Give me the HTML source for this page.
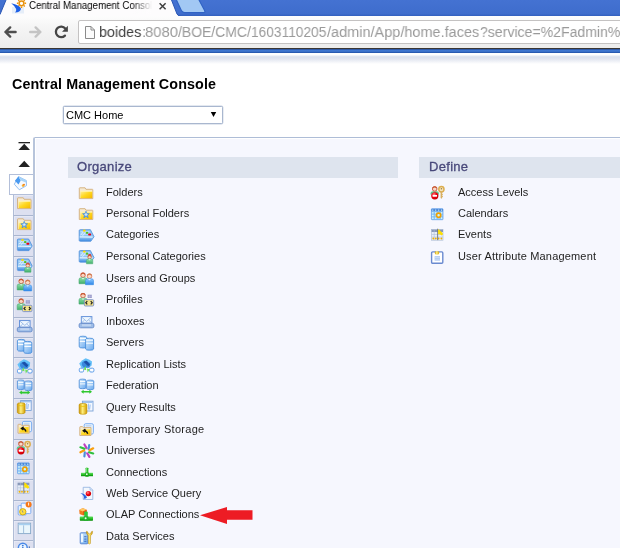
<!DOCTYPE html>
<html><head><meta charset="utf-8">
<style>
*{margin:0;padding:0;box-sizing:border-box}
html,body{width:620px;height:554px;overflow:hidden;background:#fff;font-family:"Liberation Sans",sans-serif}
.abs{position:absolute}
#frame{left:0;top:0;width:620px;height:17px;background:linear-gradient(#4472d2,#3f6dcc 80%,#2d5ab8)}
#toolbar{left:0;top:16px;width:620px;height:32px;background:linear-gradient(#fdfdfd,#f6f6f6 30%,#ececec)}
#addr{left:78px;top:20px;width:560px;height:24px;background:#fff;border:1px solid #c4c2c2;border-radius:2px}
.at{top:22.5px;font-size:15.5px;line-height:18px;color:#9a9a9a;white-space:nowrap;transform-origin:0 0;will-change:transform}
#darkline{left:0;top:48px;width:620px;height:1px;background:#3a3633}
#blueband{left:0;top:49px;width:620px;height:4px;background:linear-gradient(#234a94,#3f77d0 35%,#3a70c8 65%,#1f4ea4)}
#shade{left:0;top:53px;width:620px;height:11px;background:linear-gradient(#fff,#fff 15%,#dbe1ed 35%,#e2e6f0 55%,#fff)}
#title{left:12px;top:75.5px;letter-spacing:0.12px;font-size:14.3px;font-weight:bold;color:#000;white-space:nowrap;will-change:transform}
#sel{left:63px;top:106px;width:160px;height:18px;border:1px solid #a9b7cf;border-radius:1.5px;background:#fff;box-shadow:0 0 0 0.4px #c8d2e2}
#seltxt{left:66px;top:109px;font-size:11px;color:#000;will-change:transform}
#panel{left:33px;top:137px;width:600px;height:411px;background:#f6f7fe;border-left:2px solid #b7c4db;border-top:1px solid #aebdd7;box-shadow:inset 1px 1px 0 #fff;border-top-left-radius:2px}
.hdr{height:21px;background:#dee4ee;top:157px}
.hdrt{font-size:13px;letter-spacing:0.3px;color:#48487a;-webkit-text-stroke:0.3px #48487a;top:159px;white-space:nowrap;will-change:transform}
.it{font-size:11px;line-height:13px;color:#1e1e1e;white-space:nowrap;will-change:transform}
.tab{left:13px;width:20px;background:#dde0f0;border-left:1px solid #b0bcd6;border-top:1px solid #aab6d0;box-shadow:inset 1px 1px 0 #e6e9f5}
#seltab{left:9px;top:174px;width:24px;height:21px;background:#fff;border:1px solid #b3bfd9;border-right:none}
#bottomwhite{left:0;top:548px;width:620px;height:6px;background:#fff}
</style></head><body>
<div id="frame" class="abs"></div>
<!-- active tab -->
<svg class="abs" style="left:0;top:0" width="620" height="20">
  <path d="M0,14.5 L6,0 L171.5,0 L177,14 Q178.5,16.5 181,16.5 L620,16.5 L620,20 L0,20 Z" fill="#fdfcfd"/>
  <path d="M171.5,0 L177,14 Q178.5,16.5 181,16.5" stroke="#2b57b4" stroke-width="1" fill="none"/>
  <path d="M176,-1 L198.5,-1 L204.6,10.6 Q205.6,12.6 203.4,12.6 L184.6,12.6 Q182.6,12.6 181.6,10.9 Z" fill="#a2c8f4" stroke="#2f62c4" stroke-width="1.1"/>
</svg>
<div id="toolbar" class="abs"></div>
<svg class="abs" style="left:0;top:0" width="620" height="20">
  <path d="M0,14.5 L6,0" stroke="#2b57b4" stroke-width="1" fill="none"/>
</svg>
<!-- favicon -->
<svg class="abs" style="left:0;top:0" width="28" height="15">
  <rect x="12" y="7" width="12" height="6.5" fill="#e6eef9"/>
  <circle cx="21.5" cy="3.3" r="2.4" fill="#fff" stroke="#e8900a" stroke-width="1.5"/>
  <path d="M24.70,3.30 L26.10,3.30 M23.76,5.56 L24.75,6.55 M21.50,6.50 L21.50,7.90 M19.24,5.56 L18.25,6.55 M18.30,3.30 L16.90,3.30 M19.24,1.04 L18.25,0.05 M21.50,0.10 L21.50,-1.30 M23.76,1.04 L24.75,0.05 " stroke="#e8900a" stroke-width="1.4"/>
  <path d="M11.2,3.3 Q19.5,4.8 21,8.8 Q20.5,12.3 15,12.6 Q18.6,9.2 11.2,3.3Z" fill="#1d5fe6"/>
</svg>
<div class="abs" style="left:29px;top:0px;font-size:10px;line-height:12px;color:#000;white-space:nowrap;width:128px;overflow:hidden;transform-origin:0 0;transform:scaleX(0.97);will-change:transform">Central Management Console</div>
<div class="abs" style="left:132px;top:0px;width:24px;height:14px;background:linear-gradient(90deg,rgba(253,252,253,0),#fdfcfd 85%)"></div>
<svg class="abs" style="left:157px;top:1px" width="12" height="12"><path d="M2.6,2.3 L8.6,8.3 M8.6,2.3 L2.6,8.3" stroke="#404040" stroke-width="1.5"/></svg>

<!-- nav -->
<svg class="abs" style="left:0;top:18px" width="78" height="30">
  <path d="M15.6,14 L5.6,14 M10.2,9.4 L5.4,14 L10.2,18.6" stroke="#4e4e4e" stroke-width="2.4" fill="none" stroke-linecap="round" stroke-linejoin="round"/>
  <path d="M30.2,14 L40.2,14 M35.6,9.4 L40.4,14 L35.6,18.6" stroke="#c4c4c4" stroke-width="2.4" fill="none" stroke-linecap="round" stroke-linejoin="round"/>
  <path d="M65.26,10.49 A5.3,5.3 0 1 0 64.95,17.65" stroke="#454545" stroke-width="2.3" fill="none" stroke-linecap="round"/>
  <path d="M67.9,7.8 L67.9,13.7 L62,13.7 Z" fill="#454545"/>
</svg>
<div id="addr" class="abs"></div>
<svg class="abs" style="left:84px;top:25px" width="12" height="15">
  <path d="M1.5,1.5 L7,1.5 L10.5,5 L10.5,13.5 L1.5,13.5 Z M7,1.5 L7,5 L10.5,5" fill="#fbfbfb" stroke="#8a8a8a" stroke-width="1"/>
</svg>
<div class="abs at" style="left:99.1px;color:#404040;transform:scaleX(0.925)">boides</div>
<div class="abs at" style="left:141.9px">:</div>
<div class="abs at" style="left:145px;transform:scaleX(0.96)">8080</div>
<div class="abs at" style="left:178px;transform:scaleX(0.9)">/BOE/CMC/</div>
<div class="abs at" style="left:251.1px;transform:scaleX(0.886)">1603110205</div>
<div class="abs at" style="left:326.5px;transform:scaleX(0.935)">/admin/App/home.faces</div>
<div class="abs at" style="left:480px;transform:scaleX(0.908)">?service=%2Fadmin%2F</div>
<div id="darkline" class="abs"></div>
<div id="blueband" class="abs"></div>
<div id="shade" class="abs"></div>

<div id="title" class="abs">Central Management Console</div>
<div id="sel" class="abs"></div>
<div id="seltxt" class="abs">CMC Home</div>
<svg class="abs" style="left:209px;top:110px" width="10" height="9"><path d="M1.8,2 L7.2,2 L4.5,7 Z" fill="#000"/></svg>

<!-- sidebar arrows -->
<svg class="abs" style="left:17px;top:140px" width="15" height="30">
  <rect x="1.5" y="2" width="11.5" height="1.3" fill="#222"/>
  <path d="M1.5,10 L7.25,3.8 L13,10 Z" fill="#222"/>
  <path d="M1.5,27 L7.25,20.8 L13,27 Z" fill="#222"/>
</svg>

<div id="panel" class="abs"></div>
<div id="tabs"><div class="abs tab" style="top:194px;height:21px"></div><div class="abs tab" style="top:215px;height:20px"></div><div class="abs tab" style="top:235px;height:21px"></div><div class="abs tab" style="top:256px;height:20px"></div><div class="abs tab" style="top:276px;height:20px"></div><div class="abs tab" style="top:296px;height:21px"></div><div class="abs tab" style="top:317px;height:20px"></div><div class="abs tab" style="top:337px;height:20px"></div><div class="abs tab" style="top:357px;height:21px"></div><div class="abs tab" style="top:378px;height:20px"></div><div class="abs tab" style="top:398px;height:20px"></div><div class="abs tab" style="top:418px;height:21px"></div><div class="abs tab" style="top:439px;height:20px"></div><div class="abs tab" style="top:459px;height:20px"></div><div class="abs tab" style="top:479px;height:21px"></div><div class="abs tab" style="top:500px;height:20px"></div><div class="abs tab" style="top:520px;height:20px"></div><div class="abs tab" style="top:540px;height:21px"></div></div><!--/tabs-->
<div id="seltab" class="abs"></div>

<div class="abs hdr" style="left:68px;width:330px"></div>
<div class="abs hdrt" style="left:77px">Organize</div>
<div class="abs hdr" style="left:419px;width:201px"></div>
<div class="abs hdrt" style="left:428.5px">Define</div>

<svg id="icons" class="abs" style="left:0;top:0;overflow:hidden" width="620" height="548"><defs>
<linearGradient id="gy" x1="0" y1="0" x2="1" y2="1"><stop offset="0" stop-color="#fff0a0"/><stop offset="0.5" stop-color="#ffd820"/><stop offset="1" stop-color="#f5b800"/></linearGradient>
<linearGradient id="gb" x1="0" y1="0" x2="0" y2="1"><stop offset="0" stop-color="#a8d4f8"/><stop offset="1" stop-color="#3f8ae0"/></linearGradient>
<linearGradient id="gb2" x1="0" y1="0" x2="1" y2="1"><stop offset="0" stop-color="#d8ecfc"/><stop offset="1" stop-color="#6aaaf0"/></linearGradient>
<linearGradient id="gg" x1="0" y1="0" x2="0" y2="1"><stop offset="0" stop-color="#8ee0a8"/><stop offset="1" stop-color="#3fae6a"/></linearGradient>
<linearGradient id="gbl" x1="0" y1="0" x2="0" y2="1"><stop offset="0" stop-color="#8cc8ff"/><stop offset="1" stop-color="#2e86e8"/></linearGradient>
<linearGradient id="ggold" x1="0" y1="0" x2="1" y2="0"><stop offset="0" stop-color="#c89000"/><stop offset="0.45" stop-color="#fff080"/><stop offset="1" stop-color="#d09a00"/></linearGradient>
<linearGradient id="gpipe" x1="0" y1="0" x2="0" y2="1"><stop offset="0" stop-color="#60e060"/><stop offset="0.5" stop-color="#2ec02e"/><stop offset="1" stop-color="#008a00"/></linearGradient>
<radialGradient id="gred" cx="0.4" cy="0.35" r="0.7"><stop offset="0" stop-color="#ff9090"/><stop offset="0.5" stop-color="#f00010"/><stop offset="1" stop-color="#c00000"/></radialGradient>
<radialGradient id="gstar" cx="0.5" cy="0.5" r="0.5"><stop offset="0" stop-color="#e8f6ff"/><stop offset="1" stop-color="#3a8ae8"/></radialGradient>
<symbol id="folder" viewBox="0 0 20 20">
 <path d="M3.3,14.6 L3.3,4.3 Q3.3,3.8 3.8,3.8 L9.1,3.8 L9.9,5.3 L16.3,5.3 Q16.8,5.3 16.8,5.8 L16.8,14.6 Z" fill="#f6ead2" stroke="#d2ae78" stroke-width="0.9"/>
 <rect x="4.4" y="6.9" width="11.8" height="7.2" fill="url(#gy)"/>
 <rect x="4.4" y="6.9" width="11.8" height="0.8" fill="#fff6c0"/>
</symbol>
<symbol id="i0" viewBox="0 0 20 20"><use href="#folder" width="20" height="20"/></symbol>
<symbol id="i1" viewBox="0 0 20 20"><use href="#folder" width="20" height="20"/>
 <path d="M10,6.3 L11,8.6 L13.4,8.8 L11.6,10.4 L12.2,12.8 L10,11.5 L7.8,12.8 L8.4,10.4 L6.6,8.8 L9,8.6 Z" fill="url(#gstar)" stroke="#3a86e0" stroke-width="0.6"/>
</symbol>
<symbol id="cat" viewBox="0 0 20 20">
 <path d="M3.2,5 Q3.2,4 4.2,4 L14.4,4 L18,11 L14.8,15.6 L4.2,15.6 Q3.2,15.6 3.2,14.6 Z" fill="#8ec4f4" stroke="#4a8ad8" stroke-width="0.8"/>
 <path d="M4.6,9.6 L7.4,6 M6.4,10.4 L9.6,6.4" stroke="#f0f8ff" stroke-width="0.7"/>
 <path d="M4.4,6.2 L13.6,6.2 M4.4,8.4 L14.6,8.4" stroke="#e0f0ff" stroke-width="0.7"/>
 <path d="M3.6,10.8 L17.4,11 L14.5,15.3 L3.6,15.3 Z" fill="url(#gb)"/>
 <path d="M3.8,11.2 L16.6,11.4" stroke="#f4faff" stroke-width="0.9"/>
 <ellipse cx="8.3" cy="5" rx="1.4" ry="1.1" fill="#ffd800"/>
 <ellipse cx="11" cy="7.1" rx="1.3" ry="1.1" fill="#50c020"/>
 <rect x="12.2" y="7.7" width="2.9" height="2" rx="0.6" fill="#e80010"/>
</symbol>
<symbol id="i2" viewBox="0 0 20 20"><use href="#cat" width="20" height="20"/></symbol>
<symbol id="person" viewBox="0 0 20 20">
 <circle cx="10" cy="6" r="2.3" fill="#f8d4c0" stroke="#cc6040" stroke-width="0.9"/>
 <path d="M7.9,5.2 Q10,2.8 12.1,5.2" stroke="#c85a36" stroke-width="1.3" fill="none"/>
 <path d="M6,14.5 L6,10.4 Q6,8.6 8,8.6 L12,8.6 Q14,8.6 14,10.4 L14,14.5 Z" fill="url(#gg)" stroke="#4aa870" stroke-width="0.6"/>
 <path d="M8.5,8.8 L10,10.4 L11.5,8.8" fill="#d8f8e8"/>
</symbol>
<symbol id="personb" viewBox="0 0 20 20">
 <circle cx="10" cy="6" r="2.3" fill="#fadcc8" stroke="#d88060" stroke-width="0.9"/>
 <path d="M7.9,5.2 Q10,2.8 12.1,5.2" stroke="#d07850" stroke-width="1.3" fill="none"/>
 <path d="M6,14.5 L6,10.4 Q6,8.6 8,8.6 L12,8.6 Q14,8.6 14,10.4 L14,14.5 Z" fill="url(#gbl)" stroke="#3a90e8" stroke-width="0.6"/>
 <path d="M8.5,8.8 L10,10.4 L11.5,8.8" fill="#d8f0ff"/>
</symbol>
<symbol id="i3" viewBox="0 0 20 20"><g transform="translate(0,-1)"><use href="#cat" width="20" height="20"/></g>
 <use href="#person" x="5.6" y="4.6" width="16" height="16"/>
</symbol>
<symbol id="i4" viewBox="0 0 20 20">
 <use href="#person" x="-3" y="-0.6" width="20" height="20"/>
 <use href="#personb" x="3.5" y="0.4" width="20" height="20"/>
</symbol>
<symbol id="i5" viewBox="0 0 20 20">
 <use href="#person" x="-3" y="-0.8" width="20" height="20" transform="translate(0,0)"/>
 <rect x="11.6" y="4.3" width="4.2" height="3.3" fill="#9898c8"/>
 <path d="M11.6,5.9 L15.8,5.9 M13.7,4.3 L13.7,7.6" stroke="#c8c8e8" stroke-width="0.5"/>
 <rect x="8.3" y="9.3" width="9.4" height="6.3" rx="1" fill="#f4e48a" stroke="#7a90c8" stroke-width="0.9"/>
 <path d="M11.3,10.8 L9.8,12.4 L11.3,14 M14.7,10.8 L16.2,12.4 L14.7,14" stroke="#222" stroke-width="1.2" fill="none"/>
</symbol>
<symbol id="i6" viewBox="0 0 20 20">
 <rect x="5.3" y="3.6" width="10.6" height="6.6" fill="#eef6fe" stroke="#5a8ad8" stroke-width="0.9"/>
 <path d="M5.6,4 L10.6,8.4 L15.6,4 M5.8,9.6 L8.6,7 M15.4,9.6 L12.6,7" stroke="#80a8e0" stroke-width="0.7" fill="none"/>
 <rect x="3.1" y="10.3" width="14.8" height="4.5" rx="1.5" fill="#9ebde8" stroke="#5a82c4" stroke-width="0.8"/>
 <rect x="6" y="11.2" width="9" height="2" fill="#c0d4f0"/>
</symbol>
<symbol id="cyl" viewBox="0 0 20 20">
 <path d="M1,2 Q1,0.5 4,0.5 Q7,0.5 7,2 L7,10.5 Q7,12 4,12 Q1,12 1,10.5 Z" fill="url(#gb2)" stroke="#4a8ad8" stroke-width="0.8"/>
 <path d="M1.6,3.2 Q4,4.2 6.4,3.2 M1.6,6.4 Q4,7.4 6.4,6.4" stroke="#ffffff" stroke-width="1" fill="none"/>
</symbol>
<symbol id="i7" viewBox="0 0 20 20">
 <path d="M3.2,3.6 Q3.2,2.4 7,2.4 Q10.8,2.4 10.8,3.6 L10.8,13 Q10.8,14.2 7,14.2 Q3.2,14.2 3.2,13 Z" fill="url(#gb2)" stroke="#3e86d8" stroke-width="0.8"/>
 <path d="M3.8,4.6 L10.2,4.6 M3.8,7.6 L10.2,7.6" stroke="#fff" stroke-width="1"/>
 <path d="M9.6,5.6 Q9.6,4.4 13.6,4.4 Q17.6,4.4 17.6,5.6 L17.6,15.2 Q17.6,16.4 13.6,16.4 Q9.6,16.4 9.6,15.2 Z" fill="url(#gb2)" stroke="#3e86d8" stroke-width="0.8"/>
 <path d="M10.2,6.4 L17,6.4 M10.2,9.4 L17,9.4" stroke="#fff" stroke-width="1"/>
</symbol>
<symbol id="i8" viewBox="0 0 20 20">
 <path d="M3.2,7.4 L6.4,4.2 L9.6,2.2 L13,3.4 L16,5.6 L15.6,9.6 L12.6,12 L5.6,12 Z" fill="#64c0f8"/>
 <path d="M6,6.4 L9.6,4.4 L14.6,7.2 L13.6,11.4 L7.6,11.6 L5.8,9 Z" fill="#3a88dc"/>
 <path d="M7.4,5.8 L10.6,4.8 L14,8.4 L12.2,10.2 Z" fill="#1a50a8"/>
 <rect x="3.3" y="12.2" width="4.3" height="3.8" rx="1.2" fill="#fff" stroke="#5a9ae8" stroke-width="1"/>
 <rect x="13.6" y="12.2" width="4.3" height="3.8" rx="1.2" fill="#fff" stroke="#5a9ae8" stroke-width="1"/>
 <path d="M9.8,10 L7.4,13.4 L10.2,14.2 Z M11.6,16.6 L13.8,13.2 L11,12.4 Z" fill="#70e060"/>
</symbol>
<symbol id="i9" viewBox="0 0 20 20">
 <path d="M3.2,3 Q3.2,2 6.6,2 Q10,2 10,3 L10,10.6 Q10,11.6 6.6,11.6 Q3.2,11.6 3.2,10.6 Z" fill="url(#gb2)" stroke="#4a8ad8" stroke-width="0.8"/>
 <path d="M4,4.4 L9.2,4.4 M4,6.8 L9.2,6.8" stroke="#fff" stroke-width="0.9"/>
 <path d="M10.6,4 Q10.6,3 14.2,3 Q17.8,3 17.8,4 L17.8,11.6 Q17.8,12.6 14.2,12.6 Q10.6,12.6 10.6,11.6 Z" fill="url(#gb2)" stroke="#4a8ad8" stroke-width="0.8"/>
 <path d="M11.4,5.4 L17,5.4 M11.4,7.8 L17,7.8" stroke="#fff" stroke-width="0.9"/>
 <path d="M5,14.6 L7.6,12.6 L7.6,13.8 L13.4,13.8 L13.4,12.6 L16,14.6 L13.4,16.6 L13.4,15.4 L7.6,15.4 L7.6,16.6 Z" fill="#2ec82e"/>
</symbol>
<symbol id="i10" viewBox="0 0 20 20">
 <rect x="6.4" y="2.6" width="10.6" height="9.8" fill="#f4f8ff" stroke="#7aa2d8" stroke-width="0.9"/>
 <rect x="6.8" y="3" width="9.8" height="1.4" fill="#a0c4f0"/>
 <path d="M12.6,5 L12.6,11 M14.2,6 L13.6,11" stroke="#90b8f0" stroke-width="0.9"/>
 <path d="M3.1,6 Q3.1,4.8 7,4.8 Q10.9,4.8 10.9,6 L10.9,14.4 Q10.9,15.7 7,15.7 Q3.1,15.7 3.1,14.4 Z" fill="url(#ggold)" stroke="#c09000" stroke-width="0.6"/>
 <path d="M3.6,7.4 Q7,8.4 10.4,7.4" stroke="#e8c000" stroke-width="0.7" fill="none"/>
</symbol>
<symbol id="i11" viewBox="0 0 20 20">
 <rect x="8.2" y="3.4" width="9.2" height="10.4" rx="1.5" fill="#e8f2fc" stroke="#70a8f0" stroke-width="0.9"/>
 <path d="M9.6,5.3 L15.4,5.3 M10,6.8 L15.4,6.8" stroke="#a8c8f0" stroke-width="0.7"/>
 <path d="M3.8,15.2 L3.8,6.9 Q3.8,6.3 4.4,6.3 L6.5,6.3 L7.3,7.3 L15,7.3 L15,15.2 Z" fill="#f6ead2" stroke="#d2ae78" stroke-width="0.9"/>
 <rect x="5" y="9" width="9.4" height="5.6" fill="url(#gy)"/>
 <path d="M11.8,13.4 Q10.6,10.4 8,10.2 M9.4,8.8 L7.2,10.4 L9.2,12" stroke="#111" stroke-width="1.3" fill="none"/>
</symbol>
<symbol id="i12" viewBox="0 0 20 20">
 <g stroke-linecap="round" stroke-width="2.2">
 <path d="M8.4,2.8 L10.6,6.4" stroke="#c040c0"/>
 <path d="M13.2,3.4 L12.6,7.4" stroke="#4a90d8"/>
 <path d="M17.2,6.6 L13.6,8.6" stroke="#f8a010"/>
 <path d="M17.2,11.8 L13,10.6" stroke="#30c040"/>
 <path d="M13.4,15.2 L11.2,11.6" stroke="#c040c0"/>
 <path d="M8.4,14.6 L8.8,10.6" stroke="#4a90d8"/>
 <path d="M4.4,10.6 L8.2,8.6" stroke="#f8a010"/>
 <path d="M4.4,5.6 L8.6,7" stroke="#30c040"/>
 </g>
</symbol>
<symbol id="pipe" viewBox="0 0 20 20">
 <rect x="9.6" y="3.6" width="2.8" height="6" rx="0.6" fill="#2ec02e"/>
 <rect x="9.9" y="3.6" width="1" height="5" fill="#7ee07e"/>
 <rect x="5" y="8.7" width="12" height="3.4" fill="url(#gpipe)"/>
 <rect x="9.2" y="8.4" width="3.6" height="4.2" rx="0.6" fill="#1aa81a"/>
 <circle cx="10.8" cy="10.1" r="0.9" fill="#e8ffe8"/>
</symbol>
<symbol id="i13" viewBox="0 0 20 20"><use href="#pipe" width="20" height="20"/></symbol>
<symbol id="i14" viewBox="0 0 20 20">
 <path d="M7.2,2.4 L14,2.4 L16.8,5.2 L16.8,14.6 L7.2,14.6 Z" fill="#f2f7fd" stroke="#8eb0e0" stroke-width="0.8"/>
 <path d="M14,2.4 L14,5.2 L16.8,5.2" fill="#d8e6f8" stroke="#8eb0e0" stroke-width="0.6"/>
 <circle cx="12.4" cy="8.7" r="2.7" fill="url(#gred)"/>
 <path d="M4.4,8.4 Q9.4,8.6 11,12.6 Q10,14 7.6,13.8 Q9.4,11 4.4,8.4 Z" fill="#2a64e0"/>
</symbol>
<symbol id="i15" viewBox="0 0 20 20">
 <path d="M3.2,4 L6.8,2.2 L10.6,3.8 L10.6,7.4 L7.2,9.6 L3.6,8 Z" fill="#f07a20"/>
 <path d="M3.2,4 L6.8,2.2 L10.6,3.8 L7,5.6 Z" fill="#ffc868"/>
 <path d="M7,5.6 L10.6,3.8 L10.6,7.4 L7.2,9.6 Z" fill="#e05a10"/>
 <rect x="8.2" y="5.6" width="3.6" height="6" rx="1" fill="#2ec83a"/>
 <rect x="3.8" y="10.6" width="13.2" height="4.2" rx="0.6" fill="url(#gpipe)"/>
 <rect x="7.6" y="10.4" width="4.8" height="4.6" rx="0.6" fill="#26b030"/>
 <circle cx="9.6" cy="12.4" r="1" fill="#e8ffe8"/>
</symbol>
<symbol id="i16" viewBox="0 0 20 20">
 <rect x="4.2" y="4.7" width="7.6" height="11" rx="0.8" fill="url(#gb2)" stroke="#5080d0" stroke-width="0.9"/>
 <rect x="5.2" y="6" width="1.6" height="8" fill="#fff"/>
 <path d="M8.2,8.6 L10.4,8.6 M8.2,11 L10.4,11 M8.2,13.2 L10.4,13.2" stroke="#3a64b8" stroke-width="0.9"/>
 <path d="M10.4,3.2 Q10.2,6 12.2,7.6 L12.4,15.4 Q13.4,16.4 14.4,15.4 L14.6,7.6 Q16.8,6 16.6,3.2 L15.4,3.6 Q15.2,5.6 13.5,5.8 Q11.8,5.6 11.6,3.6 Z" fill="url(#ggold)" stroke="#b88a10" stroke-width="0.5"/>
</symbol>
<symbol id="d0" viewBox="0 0 20 20">
 <path d="M2.4,10.4 Q2.4,7.2 5,7.2 L8.6,7.2 Q11,7.2 11,10.4 Z" fill="#5cc890"/>
 <circle cx="6.7" cy="4.9" r="2.3" fill="#f8d8c8" stroke="#cc6040" stroke-width="1"/>
 <path d="M4.5,4.2 Q6.7,1.6 8.9,4.2" stroke="#c85a36" stroke-width="1.2" fill="none"/>
 <circle cx="6.8" cy="11.8" r="3.6" fill="url(#gred)"/>
 <rect x="4.6" y="11" width="4.4" height="1.7" fill="#fff"/>
 <ellipse cx="13.4" cy="5.3" rx="2.6" ry="2.7" fill="#f4e4c0" stroke="#dcae50" stroke-width="1.5"/>
 <circle cx="13.4" cy="4.8" r="0.8" fill="#a08040"/>
 <path d="M12.6,7.6 L14.2,7.6 L14.2,14 L13.4,14.8 L12.6,14 Z" fill="#d8b060"/>
 <rect x="14" y="10.2" width="0.9" height="0.9" fill="#d8b060"/><rect x="14" y="12" width="0.9" height="0.9" fill="#d8b060"/>
</symbol>
<symbol id="d1" viewBox="0 0 20 20">
 <rect x="3.4" y="3.9" width="11.6" height="10.9" rx="0.6" fill="#a8d8fc" stroke="#5a9ae8" stroke-width="0.7"/>
 <rect x="3.4" y="3.9" width="11.6" height="2.6" fill="#4a88dc"/>
 <path d="M6.2,6.5 L6.2,14.8 M9.2,6.5 L9.2,14.8 M12.2,6.5 L12.2,14.8 M3.4,9.2 L15,9.2 M3.4,11.9 L15,11.9" stroke="#6ab0f0" stroke-width="0.6"/>
 <path d="M4.8,5.2 L4.8,5.2 M7.7,5.2 L7.7,5.2 M10.7,5.2 L10.7,5.2 M13.6,5.2 L13.6,5.2 M4.8,7.9 L4.8,7.9 M7.7,7.9 L7.7,7.9 M13.6,7.9 L13.6,7.9 M4.8,10.6 L4.8,10.6 M4.8,13.3 L4.8,13.3 M7.7,13.3 L7.7,13.3 M13.6,13.3 L13.6,13.3" stroke="#e8fff0" stroke-width="1.3" stroke-linecap="round"/>
 <circle cx="10.6" cy="10.3" r="2.1" fill="#c8f4ff" stroke="#f0a000" stroke-width="1.7"/>
</symbol>
<symbol id="d2" viewBox="0 0 20 20">
 <rect x="3.6" y="3.9" width="11.4" height="10.6" fill="#e8eef8" stroke="#a8b8d0" stroke-width="0.6"/>
 <rect x="3.6" y="3.9" width="11.4" height="2.4" fill="#8898b8"/>
 <path d="M6.2,4 L6.2,14.5 M3.6,8.8 L15,8.8 M3.6,11.4 L15,11.4" stroke="#b0c0d8" stroke-width="0.6"/>
 <path d="M5.3,12.8 L5.3,12.8 M7.8,12.8 L7.8,12.8 M10.6,12.8 L10.6,12.8 M13.4,12.8 L13.4,12.8" stroke="#f0b000" stroke-width="1.9" stroke-linecap="round"/>
 <rect x="9.2" y="3" width="0.9" height="11.4" fill="#707880"/>
 <path d="M10.1,3.6 Q12,4.2 12.6,5.6 Q14,6.4 15.2,8.2 L13.6,9.8 Q12,8 10.1,8.6 Z" fill="#ffe000"/>
</symbol>
<symbol id="d3" viewBox="0 0 20 20">
 <rect x="3.6" y="4.3" width="11.2" height="11.3" rx="1" fill="#fff" stroke="#6a8ad0" stroke-width="1.4"/>
 <ellipse cx="9" cy="5.2" rx="2.3" ry="1.9" fill="url(#ggold)"/>
 <rect x="6.6" y="8.6" width="5.4" height="4.4" fill="#a8c4f0"/>
 <path d="M6.6,10 L12,10 M6.6,11.6 L12,11.6" stroke="#e0ecff" stroke-width="0.6"/>
</symbol>
<symbol id="home" viewBox="0 0 20 20">
 <path d="M2.8,10.2 L7.8,15.8 L15,11.6 L14.8,6.5 L7,2.6 Z" fill="#f6faff" stroke="#7ab0f0" stroke-width="0.8"/>
 <path d="M3.4,6.8 L7,2.4 L9.2,6.5 L7,10.6 Z" fill="#4a9af0"/>
 <path d="M7,2.4 L14.9,6.4 L14.4,8.4 L9.2,6.5 Z" fill="#a8d4f8"/>
 <circle cx="11.6" cy="11.6" r="1.3" fill="#f8b030"/>
 <circle cx="12.5" cy="10.6" r="0.9" fill="#f07810"/>
</symbol>
<symbol id="s15" viewBox="0 0 20 20">
 <rect x="4" y="5.6" width="8" height="9.4" rx="1" fill="#e8f2fc" stroke="#6aa0f0" stroke-width="0.8"/>
 <rect x="7" y="3.2" width="9.6" height="10.4" rx="1" fill="#f4f8ff" stroke="#6aa0f0" stroke-width="0.8"/>
 <circle cx="14.4" cy="4.6" r="3" fill="#f87818"/>
 <rect x="14" y="2.6" width="0.9" height="3" fill="#fff"/>
 <circle cx="8.6" cy="11.8" r="3.2" fill="#ffe040" stroke="#c8a000" stroke-width="0.8"/>
 <path d="M8,10.4 L8.8,12.6" stroke="#5070c0" stroke-width="0.7"/>
</symbol>
<symbol id="s16" viewBox="0 0 20 20">
 <rect x="4" y="3.2" width="12.4" height="10.4" fill="#eaf6fc" stroke="#88a8c8" stroke-width="0.9"/>
 <rect x="4.4" y="3.6" width="11.6" height="1.6" fill="#a8d0f0"/>
 <path d="M9.4,5.4 L9.4,13.4" stroke="#98b8d8" stroke-width="0.9"/>
</symbol>
<symbol id="s17" viewBox="0 0 20 20">
 <circle cx="8.6" cy="7.6" r="4.4" fill="#e8f4ff" stroke="#4a8ae8" stroke-width="1.5"/>
 <circle cx="8.6" cy="5.6" r="0.9" fill="#3a78d8"/>
 <rect x="7.9" y="7" width="1.4" height="3.6" fill="#3a78d8"/>
 <rect x="14.6" y="6.4" width="1" height="5" fill="#3060b0"/>
</symbol>
</defs><use href="#i0" x="76" y="184.00" width="20" height="20"/><use href="#i1" x="76" y="204.90" width="20" height="20"/><use href="#i2" x="76" y="225.70" width="20" height="20"/><use href="#i3" x="76" y="247.60" width="20" height="20"/><use href="#i4" x="76" y="269.80" width="20" height="20"/><use href="#i5" x="76" y="290.40" width="20" height="20"/><use href="#i6" x="76" y="313.00" width="20" height="20"/><use href="#i7" x="76" y="333.80" width="20" height="20"/><use href="#i8" x="76" y="356.00" width="20" height="20"/><use href="#i9" x="76" y="377.10" width="20" height="20"/><use href="#i10" x="76" y="398.60" width="20" height="20"/><use href="#i11" x="76" y="420.30" width="20" height="20"/><use href="#i12" x="76" y="441.70" width="20" height="20"/><use href="#i13" x="76" y="464.10" width="20" height="20"/><use href="#i14" x="76" y="484.90" width="20" height="20"/><use href="#i15" x="76" y="505.90" width="20" height="20"/><use href="#i16" x="76" y="528.10" width="20" height="20"/><use href="#d0" x="428" y="184.00" width="20" height="20"/><use href="#d1" x="428" y="204.90" width="20" height="20"/><use href="#d2" x="428" y="225.70" width="20" height="20"/><use href="#d3" x="428" y="247.60" width="20" height="20"/><use href="#i0" x="14.2" y="194" width="20" height="20"/><use href="#i1" x="14.2" y="215" width="20" height="20"/><use href="#i2" x="14.2" y="235" width="20" height="20"/><use href="#i3" x="14.2" y="256" width="20" height="20"/><use href="#i4" x="14.2" y="276" width="20" height="20"/><use href="#i5" x="14.2" y="296" width="20" height="20"/><use href="#i6" x="14.2" y="317" width="20" height="20"/><use href="#i7" x="14.2" y="337" width="20" height="20"/><use href="#i8" x="14.2" y="357" width="20" height="20"/><use href="#i9" x="14.2" y="378" width="20" height="20"/><use href="#i10" x="14.2" y="398" width="20" height="20"/><use href="#i11" x="14.2" y="418" width="20" height="20"/><use href="#d0" x="14.2" y="439" width="20" height="20"/><use href="#d1" x="14.2" y="459" width="20" height="20"/><use href="#d2" x="14.2" y="479" width="20" height="20"/><use href="#s15" x="14.2" y="500" width="20" height="20"/><use href="#s16" x="14.2" y="520" width="20" height="20"/><use href="#s17" x="14.2" y="540" width="20" height="20"/><use href="#home" x="11.5" y="174" width="20" height="20"/></svg><!--/icons-->
<div id="items"><div class="abs it" style="left:106px;top:186.39px">Folders</div><div class="abs it" style="left:106px;top:207.29px">Personal Folders</div><div class="abs it" style="left:106px;top:228.09px">Categories</div><div class="abs it" style="left:106px;top:249.99px">Personal Categories</div><div class="abs it" style="left:106px;top:272.19px">Users and Groups</div><div class="abs it" style="left:106px;top:292.79px">Profiles</div><div class="abs it" style="left:106px;top:315.39px">Inboxes</div><div class="abs it" style="left:106px;top:336.19px">Servers</div><div class="abs it" style="left:106px;top:358.39px">Replication Lists</div><div class="abs it" style="left:106px;top:379.49px">Federation</div><div class="abs it" style="left:106px;top:400.99px">Query Results</div><div class="abs it" style="left:106px;top:422.69px;letter-spacing:0.29px">Temporary Storage</div><div class="abs it" style="left:106px;top:444.09px">Universes</div><div class="abs it" style="left:106px;top:466.49px">Connections</div><div class="abs it" style="left:106px;top:487.29px">Web Service Query</div><div class="abs it" style="left:106px;top:508.29px">OLAP Connections</div><div class="abs it" style="left:106px;top:530.49px">Data Services</div><div class="abs it" style="left:457.5px;top:186.39px">Access Levels</div><div class="abs it" style="left:457.5px;top:207.29px">Calendars</div><div class="abs it" style="left:457.5px;top:228.09px">Events</div><div class="abs it" style="left:457.5px;top:249.99px;letter-spacing:0.17px">User Attribute Management</div></div><!--/items-->

<!-- red arrow -->
<svg class="abs" style="left:195px;top:503px" width="62" height="25">
  <path d="M5,12.2 L32,4 L32,7.2 L57.5,7.2 L57.5,16.8 L32,16.8 L32,21 Z" fill="#ed1c24"/>
</svg>
<div id="bottomwhite" class="abs"></div>
</body></html>
